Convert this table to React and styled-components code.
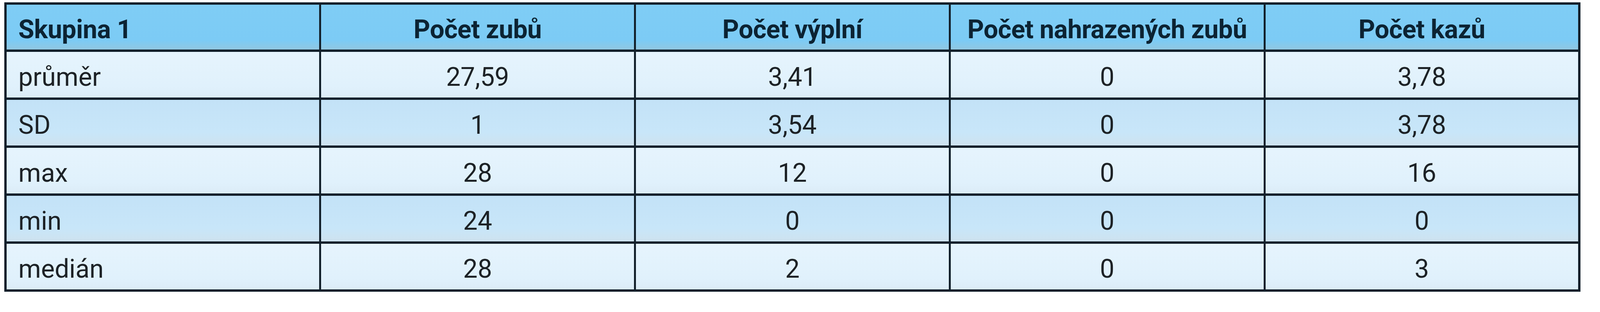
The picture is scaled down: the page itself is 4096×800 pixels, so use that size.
import React from "react";
import styled, { createGlobalStyle } from "styled-components";

const Global = createGlobalStyle`
  html, body { margin: 0; padding: 0; background: #ffffff; }
  body { font-family: Roboto, "Open Sans", sans-serif; }
`;

const Page = styled.div`
  padding: 6px 0 0 11px;
`;

const Table = styled.table`
  width: 4035px;
  border-collapse: collapse;
  table-layout: fixed;
  border: 6px solid #12202b;
  font-family: Roboto, "Open Sans", sans-serif;
  font-size: 66px;
`;

const HeadRow = styled.tr`
  height: 121px;
  background: linear-gradient(180deg, #7fcdf5 0%, #7ccbf5 78%, #93c7df 100%);
`;

const BodyRow = styled.tr`
  height: 123px;
  background: ${(p) =>
    p.$alt
      ? "linear-gradient(180deg, #c3e2f7 0%, #c8e6f9 70%, #cfe2ee 100%)"
      : "linear-gradient(180deg, #e6f4fd 0%, #e0f1fc 75%, #dbebf6 100%)"};
`;

const Th = styled.th`
  border-left: 5px solid #12202b;
  border-right: 5px solid #12202b;
  border-bottom: 6px solid #12202b;
  padding: 12px 30px 0;
  font-weight: 700;
  color: #0c2333;
  text-align: ${(p) => (p.$left ? "left" : "center")};
  white-space: nowrap;
  letter-spacing: -0.5px;
`;

const Td = styled.td`
  border-left: 5px solid #12202b;
  border-right: 5px solid #12202b;
  border-bottom: 6px solid #12202b;
  padding: 12px 30px 0;
  font-weight: 400;
  color: #1d2226;
  text-align: ${(p) => (p.$left ? "left" : "center")};
  white-space: nowrap;
`;

const headers = [
  "Skupina 1",
  "Počet zubů",
  "Počet výplní",
  "Počet nahrazených zubů",
  "Počet kazů",
];

const rows = [
  ["průměr", "27,59", "3,41", "0", "3,78"],
  ["SD", "1", "3,54", "0", "3,78"],
  ["max", "28", "12", "0", "16"],
  ["min", "24", "0", "0", "0"],
  ["medián", "28", "2", "0", "3"],
];

export default function App() {
  return (
    <>
      <Global />
      <Page>
        <Table>
          <thead>
            <HeadRow>
              {headers.map((h, i) => (
                <Th key={h} $left={i === 0}>
                  {h}
                </Th>
              ))}
            </HeadRow>
          </thead>
          <tbody>
            {rows.map((r, ri) => (
              <BodyRow key={r[0]} $alt={ri % 2 === 1}>
                {r.map((c, ci) => (
                  <Td key={ci} $left={ci === 0}>
                    {c}
                  </Td>
                ))}
              </BodyRow>
            ))}
          </tbody>
        </Table>
      </Page>
    </>
  );
}
